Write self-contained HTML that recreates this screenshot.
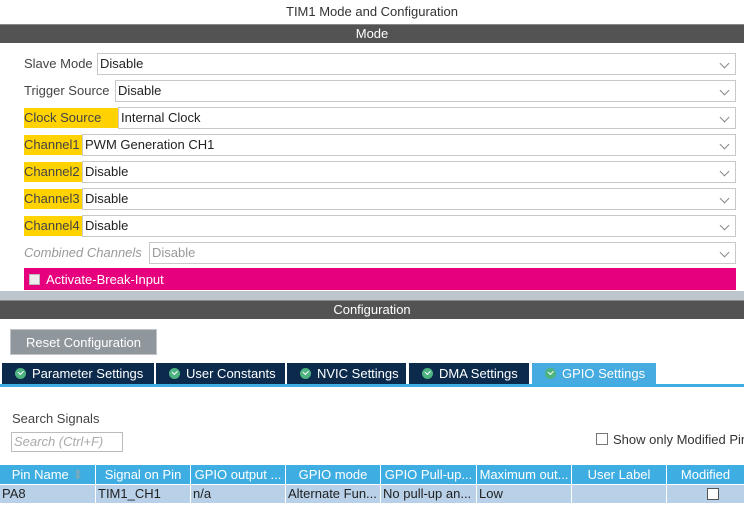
<!DOCTYPE html>
<html><head><style>
*{margin:0;padding:0;box-sizing:border-box}
body{width:744px;height:510px;background:#fff;font-family:"Liberation Sans",sans-serif;font-size:13px;color:#333;position:relative;overflow:hidden}
.a{position:absolute}
.bar{left:0;width:744px;background:#535353;color:#fff;text-align:center;font-size:13px;line-height:17px;border-top:1px solid #888}
.lbl{left:24px;height:20px;line-height:20px;color:#444}
.y{background:#ffd200;color:#444}
.sel{height:22px;border:1px solid #c8c8c8;right:8px;line-height:20px;padding-left:2px;color:#222}
.sel:after{content:"";position:absolute;right:7px;top:6px;width:6px;height:6px;border-right:1.3px solid #888;border-bottom:1.3px solid #888;transform:rotate(45deg)}
.tab{top:363px;height:21px;background:#0b2a4c;color:#fff;line-height:21px;font-size:13px;white-space:nowrap}
.tab i{display:inline-block;width:11px;height:11px;border-radius:50%;background:#4db380;margin:0 6px 0 13px;vertical-align:-1px;position:relative}
.tab i:after{content:"";position:absolute;left:3px;top:2px;width:4px;height:2.5px;border-left:1.5px solid #fff;border-bottom:1.5px solid #fff;transform:rotate(-45deg)}
.th{top:465px;height:19px;background:#3eaee2;color:#fff;line-height:19px;text-align:center;overflow:hidden;white-space:nowrap}
.td{top:485px;height:18px;background:#b8d0e8;color:#222;line-height:18px;padding-left:2px;overflow:hidden;white-space:nowrap}
</style></head><body>
<div class="a" style="top:4px;left:0;width:744px;text-align:center;color:#333">TIM1 Mode and Configuration</div>
<div class="a bar" style="top:24px;height:19px">Mode</div>

<div class="a lbl" style="top:54px">Slave Mode</div><div class="a sel" style="top:53px;left:97px">Disable</div>
<div class="a lbl" style="top:81px">Trigger Source</div><div class="a sel" style="top:80px;left:115px">Disable</div>
<div class="a lbl y" style="top:108px;width:94px">Clock Source</div><div class="a sel" style="top:107px;left:118px">Internal Clock</div>
<div class="a lbl y" style="top:135px;width:58px">Channel1</div><div class="a sel" style="top:134px;left:82px">PWM Generation CH1</div>
<div class="a lbl y" style="top:162px;width:58px">Channel2</div><div class="a sel" style="top:161px;left:82px">Disable</div>
<div class="a lbl y" style="top:189px;width:58px">Channel3</div><div class="a sel" style="top:188px;left:82px">Disable</div>
<div class="a lbl y" style="top:216px;width:58px">Channel4</div><div class="a sel" style="top:215px;left:82px">Disable</div>
<div class="a lbl" style="top:243px;color:#999;font-style:italic">Combined Channels</div><div class="a sel" style="top:242px;left:149px;color:#999">Disable</div>
<div class="a" style="top:268px;left:24px;width:712px;height:22px;background:#e6007e;color:#fff;line-height:23px;padding-left:22px">Activate-Break-Input</div>
<div class="a" style="top:274px;left:29px;width:11px;height:11px;background:#eee;border:1px solid #bbb"></div>

<div class="a" style="top:291px;left:0;width:744px;height:9px;background:#bcc6cc"></div>
<div class="a bar" style="top:300px;height:19px">Configuration</div>
<div class="a" style="top:329px;left:10px;width:147px;height:26px;background:#8f969c;border:1px solid #c0c4c8;color:#fff;text-align:center;line-height:25px">Reset Configuration</div>

<div class="a tab" style="left:2px;width:152px"><i></i>Parameter Settings</div>
<div class="a tab" style="left:156px;width:129px"><i></i>User Constants</div>
<div class="a tab" style="left:287px;width:119px"><i></i>NVIC Settings</div>
<div class="a tab" style="left:409px;width:120px"><i></i>DMA Settings</div>
<div class="a tab" style="left:532px;width:124px;background:#45abe0"><i></i>GPIO Settings</div>
<div class="a" style="top:384px;left:0;width:744px;height:3px;background:#3eaee2"></div>

<div class="a" style="top:411px;left:12px;color:#444">Search Signals</div>
<div class="a" style="top:432px;left:11px;width:112px;height:20px;border:1px solid #bbb;color:#aaa;font-style:italic;line-height:18px;padding-left:2px">Search (Ctrl+F)</div>
<div class="a" style="top:433px;left:596px;width:12px;height:12px;border:1px solid #777"></div>
<div class="a" style="top:432px;left:613px;color:#333;white-space:nowrap">Show only Modified Pins</div>

<div class="a th" style="left:0;width:95px">Pin Name <span style="color:#7ab">⬍</span></div>
<div class="a th" style="left:96px;width:94px">Signal on Pin</div>
<div class="a th" style="left:191px;width:94px">GPIO output ...</div>
<div class="a th" style="left:286px;width:94px">GPIO mode</div>
<div class="a th" style="left:381px;width:95px">GPIO Pull-up...</div>
<div class="a th" style="left:477px;width:94px">Maximum out...</div>
<div class="a th" style="left:572px;width:94px">User Label</div>
<div class="a th" style="left:667px;width:77px">Modified</div>

<div class="a td" style="left:0;width:95px">PA8</div>
<div class="a td" style="left:96px;width:94px">TIM1_CH1</div>
<div class="a td" style="left:191px;width:94px">n/a</div>
<div class="a td" style="left:286px;width:94px">Alternate Fun...</div>
<div class="a td" style="left:381px;width:95px">No pull-up an...</div>
<div class="a td" style="left:477px;width:94px">Low</div>
<div class="a td" style="left:572px;width:94px"></div>
<div class="a td" style="left:667px;width:77px"></div>
<div class="a" style="top:488px;left:707px;width:12px;height:12px;border:1px solid #555;background:#fff"></div>
</body></html>
